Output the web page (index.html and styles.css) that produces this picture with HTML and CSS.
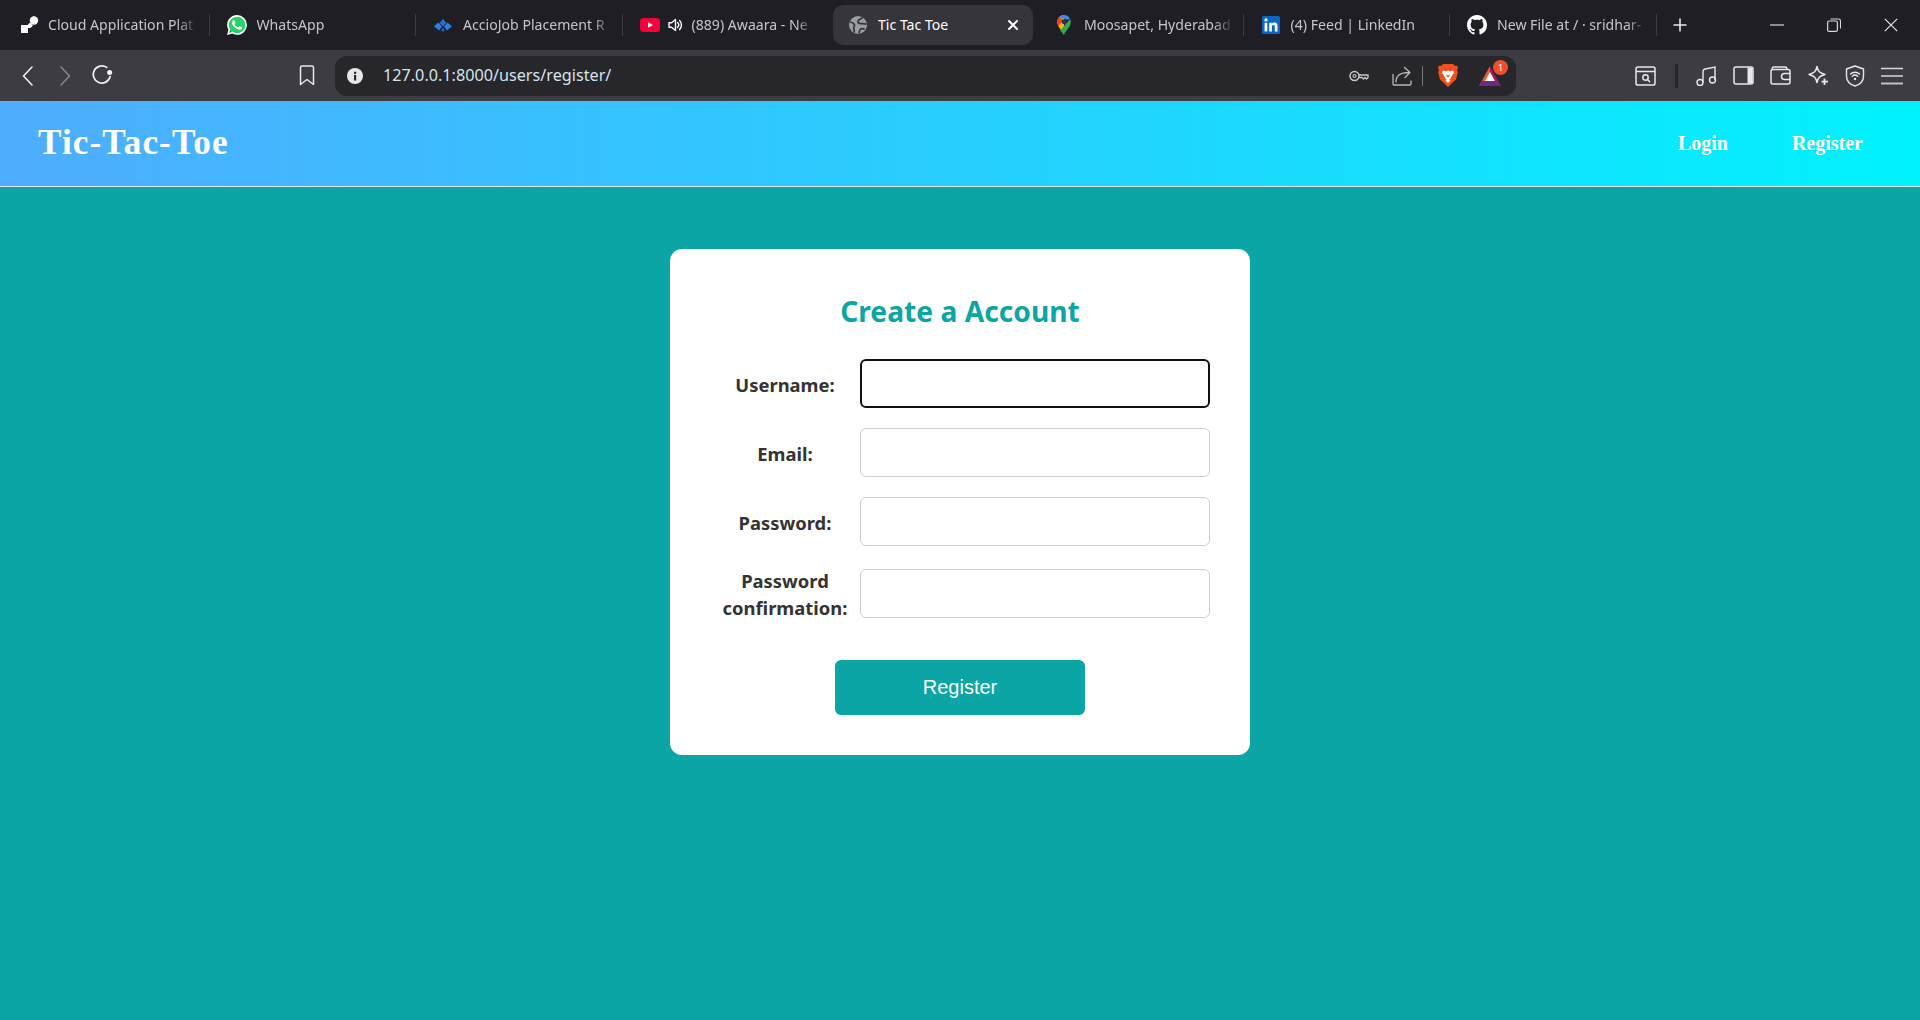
FILE: index.html
```html
<!DOCTYPE html>
<html lang="en">
<head>
<meta charset="utf-8">
<title>Tic Tac Toe</title>
<link rel="stylesheet" href="styles.css">
</head>
<body>
<div class="browser">
  <div class="tabstrip">
    <div class="tabs">
      <div class="tab tab-first">
        <span class="tab-icon"><svg width="18" height="18" viewBox="0 0 18 18"><circle cx="13" cy="4.5" r="4.2" fill="#fff"/><path d="M9 6.5l3 3-2.5 2.5H7v5H0V9h6.5z" fill="#fff"/></svg></span>
        <span class="tab-label">Cloud Application Plat</span>
      </div>
      <div class="tab">
        <span class="tab-icon"><svg width="20" height="20" viewBox="0 0 24 24"><circle cx="12" cy="12" r="11" fill="#25d366"/><path fill="#fff" d="M17.472 14.382c-.297-.149-1.758-.867-2.03-.967-.273-.099-.471-.148-.67.15-.197.297-.767.966-.94 1.164-.173.199-.347.223-.644.075-.297-.15-1.255-.463-2.39-1.475-.883-.788-1.48-1.761-1.653-2.059-.173-.297-.018-.458.13-.606.134-.133.298-.347.446-.52.149-.174.198-.298.298-.497.099-.198.05-.371-.025-.52-.075-.149-.669-1.612-.916-2.207-.242-.579-.487-.5-.669-.51-.173-.008-.371-.01-.57-.01-.198 0-.52.074-.792.372-.272.297-1.04 1.016-1.04 2.479 0 1.462 1.065 2.875 1.213 3.074.149.198 2.096 3.2 5.077 4.487.709.306 1.262.489 1.694.625.712.227 1.36.195 1.871.118.571-.085 1.758-.719 2.006-1.413.248-.694.248-1.289.173-1.413-.074-.124-.272-.198-.57-.347m-5.421 7.403h-.004a9.87 9.87 0 01-5.031-1.378l-.361-.214-3.741.982.998-3.648-.235-.374a9.86 9.86 0 01-1.51-5.26c.001-5.45 4.436-9.884 9.888-9.884 2.64 0 5.122 1.03 6.988 2.898a9.825 9.825 0 012.893 6.994c-.003 5.45-4.437 9.884-9.885 9.884m8.413-18.297A11.815 11.815 0 0012.05 0C5.495 0 .16 5.335.157 11.892c0 2.096.547 4.142 1.588 5.945L.057 24l6.305-1.654a11.882 11.882 0 005.683 1.448h.005c6.554 0 11.89-5.335 11.893-11.893a11.821 11.821 0 00-3.48-8.413z"/></svg></span>
        <span class="tab-label">WhatsApp</span>
      </div>
      <div class="tab">
        <span class="tab-icon"><svg width="18" height="13" viewBox="0 0 18 13"><path d="M9 0l3.400 4L9 7.500 5.600 4z" fill="#2a6fd6"/><path d="M4.500 3.500L8 7.700 5 11.500 0 7.300z" fill="#2f7de8"/><path d="M13.500 3.500L18 7.300l-5 4.200-3-3.800z" fill="#2f7de8"/><path d="M9 8.700l2 2.400L9 13l-2-1.900z" fill="#1f5fbf"/></svg></span>
        <span class="tab-label">AccioJob Placement R</span>
      </div>
      <div class="tab tab-audio">
        <span class="tab-icon"><svg width="20" height="14" viewBox="0 0 20 14"><rect width="20" height="14" rx="3.500" fill="#f5003a"/><path d="M8 4.200L13 7l-5 2.800z" fill="#fff"/></svg></span>
        <span class="tab-sound"><svg width="15" height="14" viewBox="0 0 15 14"><path d="M1 4.700h2.600L7.500 1.500v11L3.600 9.300H1z" fill="none" stroke="#fff" stroke-width="1.400" stroke-linejoin="round"/><path d="M9.600 4.600a3.400 3.400 0 010 4.800M11.600 2.600a6.200 6.200 0 010 8.800" fill="none" stroke="#fff" stroke-width="1.400" stroke-linecap="round"/></svg></span>
        <span class="tab-label tab-label-short">(889) Awaara - Ne</span>
      </div>
      <div class="tab tab-active">
        <span class="tab-icon"><svg width="18" height="18" viewBox="0 0 18 18"><circle cx="9" cy="9" r="9" fill="#9a9ca2"/><path d="M13.500 1.500c-1 1.500-2.800 1.800-4 2.800-1.200 1.100-.6 2.700 1.100 3.100 2.300.5 4.600-.2 7 .8" fill="none" stroke="#35353b" stroke-width="1.700"/><path d="M.8 6c2.200.3 4.200 1.400 4.700 3 .4 1.500-1 1.600-.8 3.100.2 1.400 1 2.300.4 4.300" fill="none" stroke="#35353b" stroke-width="1.700"/><path d="M10 17.500c.7-1.600.2-2.800 1-3.800 1-1.200 3-1.300 4.600-.6" fill="none" stroke="#35353b" stroke-width="1.700"/></svg></span>
        <span class="tab-label">Tic Tac Toe</span>
        <span class="tab-close"><svg width="12" height="12" viewBox="0 0 12 12"><path d="M2 2l8 8M10 2l-8 8" stroke="#fff" stroke-width="2" stroke-linecap="round"/></svg></span>
      </div>
      <div class="tab">
        <span class="tab-icon"><svg width="14" height="20" viewBox="0 0 14 20"><path d="M7 20C5.800 16 .2 12 .2 6.800A6.800 6.800 0 017 0v20z" fill="#fbbc04"/><path d="M7 20c1.200-4 6.800-8 6.800-13.200 0-1-.2-2-.7-2.900L3 15.500c1.800 1.800 3.300 3 4 4.500z" fill="#34a853"/><path d="M1.900 2.200L10 4.700 13.100 3.900A6.800 6.800 0 007 0a6.800 6.800 0 00-5.100 2.200z" fill="#4285f4"/><path d="M.2 6.800c0 1.500.500 2.800 1.200 4L7 5 1.900 2.200A6.800 6.800 0 00.2 6.800z" fill="#ea4335"/><circle cx="7" cy="6.800" r="2.400" fill="#35353b"/></svg></span>
        <span class="tab-label">Moosapet, Hyderabad</span>
      </div>
      <div class="tab">
        <span class="tab-icon"><svg width="18" height="18" viewBox="0 0 18 18"><rect width="18" height="18" rx="1.500" fill="#0a66c2"/><rect x="2.600" y="6.800" width="2.700" height="8.600" fill="#fff"/><circle cx="3.950" cy="3.900" r="1.600" fill="#fff"/><path d="M7.200 6.800h2.600V8c.5-.9 1.500-1.400 2.700-1.400 2.400 0 3 1.500 3 3.700v5.100h-2.700v-4.500c0-1.100-.2-2-1.300-2-1.200 0-1.600.900-1.600 2v4.500H7.200z" fill="#fff"/></svg></span>
        <span class="tab-label">(4) Feed | LinkedIn</span>
      </div>
      <div class="tab">
        <span class="tab-icon"><svg width="20" height="20" viewBox="0 0 16 16"><path fill="#fff" d="M8 0C3.58 0 0 3.58 0 8c0 3.540 2.290 6.530 5.470 7.590.4.070.55-.170.55-.380 0-.190-.010-.820-.010-1.490-2.010.370-2.530-.490-2.690-.940-.090-.230-.480-.940-.820-1.130-.280-.150-.680-.520-.010-.530.630-.010 1.080.580 1.230.820.720 1.210 1.870.870 2.330.660.070-.520.280-.870.510-1.070-1.780-.200-3.640-.890-3.640-3.950 0-.870.310-1.590.820-2.150-.080-.200-.360-1.020.080-2.120 0 0 .670-.210 2.200.820.640-.180 1.320-.270 2-.270.680 0 1.360.090 2 .27 1.530-1.040 2.200-.820 2.200-.820.440 1.100.160 1.920.080 2.120.510.560.820 1.270.820 2.150 0 3.070-1.870 3.750-3.650 3.950.290.250.540.730.540 1.480 0 1.070-.010 1.930-.010 2.200 0 .210.150.460.550.380A8.013 8.013 0 0016 8c0-4.420-3.580-8-8-8z"/></svg></span>
        <span class="tab-label">New File at / · sridhar-</span>
      </div>
    </div>
    <div class="new-tab"><svg width="16" height="16" viewBox="0 0 16 16"><path d="M8 1.500v13M1.500 8h13" stroke="#e8e8ea" stroke-width="1.600"/></svg></div>
    <div class="window-controls">
      <svg width="14" height="14" viewBox="0 0 14 14"><path d="M0 7h14" stroke="#d8d8da" stroke-width="1.200"/></svg>
      <svg width="14" height="14" viewBox="0 0 14 14"><rect x=".6" y="3" width="9.800" height="10.400" rx="1.500" fill="none" stroke="#d8d8da" stroke-width="1.200"/><path d="M3.500 1h8a2 2 0 012 2v7.500" fill="none" stroke="#d8d8da" stroke-width="1.100"/></svg>
      <svg width="14" height="14" viewBox="0 0 14 14"><path d="M.8.800l12.400 12.400M13.200.800L.8 13.200" stroke="#e8e8ea" stroke-width="1.200"/></svg>
    </div>
  </div>

  <div class="toolbar">
    <div class="nav-buttons">
      <svg class="nav-back" width="11" height="20" viewBox="0 0 11 20"><path d="M10 1L1.500 10 10 19" fill="none" stroke="#f0f0f2" stroke-width="1.600" stroke-linecap="round" stroke-linejoin="round"/></svg>
      <svg class="nav-forward" width="11" height="20" viewBox="0 0 11 20"><path d="M1 1l8.500 9L1 19" fill="none" stroke="#85858a" stroke-width="1.600" stroke-linecap="round" stroke-linejoin="round"/></svg>
      <svg class="nav-reload" width="22" height="21" viewBox="0 0 21 20"><path d="M15 3.200A8.200 8.200 0 1018.300 12" fill="none" stroke="#f0f0f2" stroke-width="1.700" stroke-linecap="round"/><circle cx="17.800" cy="8" r="2.400" fill="#f4f4f6"/></svg>
      <svg class="nav-bookmark" width="16" height="21" viewBox="0 0 16 21"><path d="M1.500 2.500a1.500 1.500 0 011.500-1.500h10a1.500 1.500 0 011.500 1.500V19.500L8 14.500 1.500 19.500z" fill="none" stroke="#e8e8ea" stroke-width="1.500" stroke-linejoin="round"/></svg>
    </div>
    <div class="urlbar">
      <svg class="url-info" width="16" height="16" viewBox="0 0 16 16"><circle cx="8" cy="8" r="8" fill="#e8e8ea"/><rect x="7" y="7" width="2.200" height="5.500" fill="#26262b"/><rect x="7" y="3.800" width="2.200" height="2.100" fill="#26262b"/></svg>
      <span class="url-text">127.0.0.1:8000/users/register/</span>
      <div class="url-actions">
        <svg width="20" height="12" viewBox="0 0 20 12"><circle cx="5.500" cy="6" r="4.500" fill="none" stroke="#c8c8cc" stroke-width="1.500"/><circle cx="5.500" cy="6" r="1.500" fill="none" stroke="#c8c8cc" stroke-width="1.200"/><path d="M10 5h9v2.500l-1.500 1.500-1.500-1.500-1.500 1.500-1.500-1.500H10" fill="none" stroke="#c8c8cc" stroke-width="1.400" stroke-linejoin="round"/></svg>
        <svg width="20" height="20" viewBox="0 0 20 20"><path d="M1 8.500V18a1 1 0 001 1h16a1 1 0 001-1v-3" fill="none" stroke="#b8b8bc" stroke-width="1.300" stroke-linecap="round"/><path d="M4 16c0-6 3.500-9.500 13-9.500M12.500 1.500L18 6.500l-5 5" fill="none" stroke="#b8b8bc" stroke-width="1.300" stroke-linecap="round" stroke-linejoin="round"/></svg>
        <span class="url-sep"></span>
        <svg class="brave" width="20" height="23" viewBox="0 0 20 23"><path d="M5 0h10l2 2 2-.5 1 2.500-1 2 .8 2.200-1.800 7.300-3.500 3L10 23l-4.500-4.500-3.500-3L.2 8.200 1 6 0 4l1-2.500L3 2z" fill="#f1511f"/><path d="M5 6.500l3 .8 2-.8 2 .8 3-.8 1 2-2.500 4-1 2-2.500 2.500L7.500 14.500l-1-2L4 8.500z" fill="#fff"/><path d="M8 10.500l2 1 2-1-1 2.500h-2z" fill="#f1511f"/><path d="M7.500 16.500L10 15l2.500 1.500L10 19z" fill="#fff"/></svg>
        <span class="bat">
          <svg width="22" height="20" viewBox="0 0 22 20"><path d="M11 0L0 20h7l4-7z" fill="#f2542d"/><path d="M11 0l11 20h-7l-4-7z" fill="#a8174f"/><path d="M0 20h22l-3-5H3z" fill="#6a2a8c"/><path d="M11 6l-5 9h10z" fill="#fff"/></svg>
          <span class="bat-badge">1</span>
        </span>
      </div>
    </div>
    <div class="extensions">
      <svg width="21" height="20" viewBox="0 0 21 20"><rect x="1" y="1" width="19" height="18" rx="1.800" fill="none" stroke="#e8e8ea" stroke-width="1.500"/><path d="M1 5.500h19" stroke="#e8e8ea" stroke-width="1.500"/><circle cx="10.500" cy="11.500" r="2.700" fill="none" stroke="#e8e8ea" stroke-width="1.500"/><path d="M12.500 13.500l2.200 2.200" stroke="#e8e8ea" stroke-width="1.500" stroke-linecap="round"/></svg>
      <span class="ext-sep"></span>
      <svg class="ext-music" width="21" height="20" viewBox="0 0 21 20"><circle cx="4" cy="16.500" r="3" fill="none" stroke="#e8e8ea" stroke-width="1.400"/><circle cx="16.500" cy="14" r="3" fill="none" stroke="#e8e8ea" stroke-width="1.400"/><path d="M7 16.500V5.500Q7 3.500 9 3l10-2v13" fill="none" stroke="#e8e8ea" stroke-width="1.400"/></svg>
      <svg width="21" height="19" viewBox="0 0 21 19"><rect x="1" y="1" width="19" height="17" rx="2" fill="none" stroke="#e8e8ea" stroke-width="1.500"/><path d="M14.500 1.500H18a1.500 1.500 0 011.500 1.500v13a1.500 1.500 0 01-1.500 1.500h-3.500z" fill="#e8e8ea"/></svg>
      <svg width="21" height="19" viewBox="0 0 21 19"><path d="M2 3a2 2 0 012-2h11c1.500 0 2 1 2 2.500" fill="none" stroke="#e8e8ea" stroke-width="1.400"/><rect x="1" y="3.500" width="19" height="14.500" rx="2" fill="none" stroke="#e8e8ea" stroke-width="1.500"/><path d="M20 7.500h-5.500a2.500 2.500 0 000 6H20" fill="none" stroke="#e8e8ea" stroke-width="1.500"/></svg>
      <svg width="22" height="21" viewBox="0 0 22 21"><path d="M10 1.500c1 5 2.500 6.500 8 8-5.500 1.500-7 3-8 8-1-5-2.500-6.500-8-8 5.500-1.500 7-3 8-8z" fill="none" stroke="#e8e8ea" stroke-width="1.500" stroke-linejoin="round"/><path d="M17.500 13.500v6.500M14.500 16.700h6.500" stroke="#e8e8ea" stroke-width="1.800"/></svg>
      <svg width="20" height="22" viewBox="0 0 20 22"><path d="M10 1l8.500 3v7c0 5-3.500 8.500-8.500 10-5-1.500-8.500-5-8.500-10V4z" fill="none" stroke="#e8e8ea" stroke-width="1.400" stroke-linejoin="round"/><path d="M5.500 9a6.500 6.500 0 019 0M7.300 11.300a4 4 0 015.400 0" fill="none" stroke="#e8e8ea" stroke-width="1.400" stroke-linecap="round"/><circle cx="10" cy="14" r="1.200" fill="#e8e8ea"/></svg>
      <svg width="22" height="18" viewBox="0 0 22 18"><path d="M0 1.500h22M0 9h22" stroke="#d8d8da" stroke-width="1.600"/><path d="M0 16.500h22" stroke="#c0c0c4" stroke-width="2"/></svg>
    </div>
  </div>

  <div class="page">
    <header class="site-header">
      <h1 class="brand">Tic-Tac-Toe</h1>
      <nav class="site-nav">
        <a class="site-link" href="#">Login</a>
        <a class="site-link" href="#">Register</a>
      </nav>
    </header>
    <main class="site-main">
      <form class="card">
        <h2 class="card-title">Create a Account</h2>
        <div class="field">
          <label class="field-label" for="f-user">Username:</label>
          <input class="field-input is-focused" id="f-user" type="text">
        </div>
        <div class="field">
          <label class="field-label" for="f-email">Email:</label>
          <input class="field-input" id="f-email" type="email">
        </div>
        <div class="field">
          <label class="field-label" for="f-pass">Password:</label>
          <input class="field-input" id="f-pass" type="password">
        </div>
        <div class="field">
          <label class="field-label" for="f-conf">Password confirmation:</label>
          <input class="field-input" id="f-conf" type="password">
        </div>
        <button class="submit" type="button">Register</button>
      </form>
    </main>
  </div>
</div>
</body>
</html>
```

FILE: styles.css
```css
* { box-sizing: border-box; }
html, body { margin: 0; height: 100%; }
body { font-family: "Noto Sans", sans-serif; overflow: hidden; }
svg { display: block; flex: none; }

.browser { height: 100vh; display: flex; flex-direction: column; }

/* Tab strip */
.tabstrip {
  height: 50px;
  flex: none;
  background: #1e1e24;
  display: flex;
  align-items: center;
  padding-left: 3px;
}
.tabs { display: flex; align-items: center; }
.tab {
  width: 206.5px;
  height: 40px;
  display: flex;
  align-items: center;
  padding-left: 17px;
  font-size: 14.1px;
  color: #c6c6ca;
  position: relative;
}
.tab::after {
  content: "";
  position: absolute;
  right: 0;
  top: 9px;
  height: 22px;
  width: 1px;
  background: #3c3c42;
}
.tab-active::after, .tab-audio::after { display: none; }
.tab-icon { width: 20px; height: 20px; display: flex; align-items: center; justify-content: center; flex: none; }
.tab-label {
  margin-left: 10px;
  margin-bottom: 2px;
  width: 150px;
  overflow: hidden;
  white-space: nowrap;
  -webkit-mask-image: linear-gradient(to right, #000 86%, transparent 100%);
  mask-image: linear-gradient(to right, #000 86%, transparent 100%);
}
.tab-first .tab-label { margin-left: 8px; }
.tab-sound { margin-left: 8px; flex: none; }
.tab-label-short { margin-left: 9px; width: 122px; }
.tab-active {
  width: 200px;
  margin: 0 4px 0 4px;
  padding-left: 15px;
  background: #35353b;
  border-radius: 10px;
  color: #fff;
}
.tab-active .tab-label { -webkit-mask-image: none; mask-image: none; width: 120px; }
.tab-close { margin-left: 9px; }
.new-tab { margin-left: 15px; }
.window-controls { margin-left: auto; display: flex; gap: 43px; padding-right: 22px; }

/* Toolbar */
.toolbar {
  height: 51px;
  flex: none;
  background: #3c3c42;
  display: flex;
  align-items: center;
}
.nav-buttons { width: 335px; flex: none; display: flex; align-items: center; padding-left: 22px; }
.nav-forward { margin-left: 27px; }
.nav-reload { margin: 0 0 2px 20px; }
.nav-bookmark { margin-left: 186px; }
.urlbar {
  width: 1181px;
  height: 40px;
  flex: none;
  background: #26262b;
  border-radius: 12px;
  display: flex;
  align-items: center;
  padding: 0 15px 0 12px;
}
.url-text { margin: 0 0 2px 20px; font-size: 16.2px; color: #d4e4ee; }
.url-info { flex: none; }
.url-actions { margin-left: auto; display: flex; align-items: center; }
.url-actions > svg:nth-child(2) { margin-left: 23px; }
.url-sep { width: 1px; height: 20px; background: #77777c; margin: 0 15px 0 10px; }
.bat { margin-left: 21px; position: relative; display: block; }
.bat-badge {
  position: absolute;
  right: -7px;
  top: -6px;
  width: 15px;
  height: 15px;
  border-radius: 50%;
  background: #f2502c;
  color: #fff;
  font-size: 9px;
  line-height: 15px;
  text-align: center;
}
.extensions { display: flex; align-items: center; margin-left: 119px; }
.extensions > svg { margin-right: 16px; }
.extensions > svg:first-child { margin-right: 19px; }
.ext-sep { width: 3px; height: 24px; background: #26262b; margin-right: 18px; }

/* Page */
.page { flex: 1; display: flex; flex-direction: column; min-height: 0; }
.site-header {
  height: 86px;
  flex: none;
  background: linear-gradient(to right, #4facfe, #00f2fe);
  border-bottom: 1px solid #e4e4e4;
  display: flex;
  align-items: center;
  justify-content: space-between;
  padding: 0 57px 0 38px;
  font-family: "Liberation Serif", serif;
  color: #fff;
}
.brand { margin: 0 0 2px; font-size: 35.2px; font-weight: 700; letter-spacing: 1.1px; }
.site-nav { display: flex; gap: 64px; }
.site-link { color: #fff; text-decoration: none; font-weight: 700; font-size: 20px; }

.site-main {
  flex: 1;
  background: #0ba5a5;
  padding-top: 62px;
}
.card {
  width: 580px;
  margin: 0 auto;
  padding: 40px;
  background: #fff;
  border-radius: 12px;
  display: flex;
  flex-direction: column;
}
.card-title {
  margin: 0 0 26px;
  height: 44px;
  line-height: 44px;
  text-align: center;
  font-size: 28.2px;
  font-weight: 700;
  color: #0ba5a5;
}
.field { display: flex; align-items: center; margin-bottom: 20px; }
.field-label {
  width: 150px;
  flex: none;
  text-align: center;
  font-size: 18.4px;
  font-weight: 700;
  line-height: 27px;
  color: #333;
  padding: 1px 8px 0;
}
.field-input {
  width: 350px;
  height: 49px;
  border: 1px solid #ccc;
  border-radius: 6px;
  background: #fff;
  outline: none;
  padding: 0 12px;
}
.field-input.is-focused { border: 2px solid #111; }
.submit {
  align-self: center;
  width: 250px;
  height: 55px;
  margin-top: 19px;
  border: 0;
  border-radius: 6px;
  background: #0ba5a5;
  color: #fff;
  font-family: "Liberation Sans", sans-serif;
  font-size: 20px;
}
```
